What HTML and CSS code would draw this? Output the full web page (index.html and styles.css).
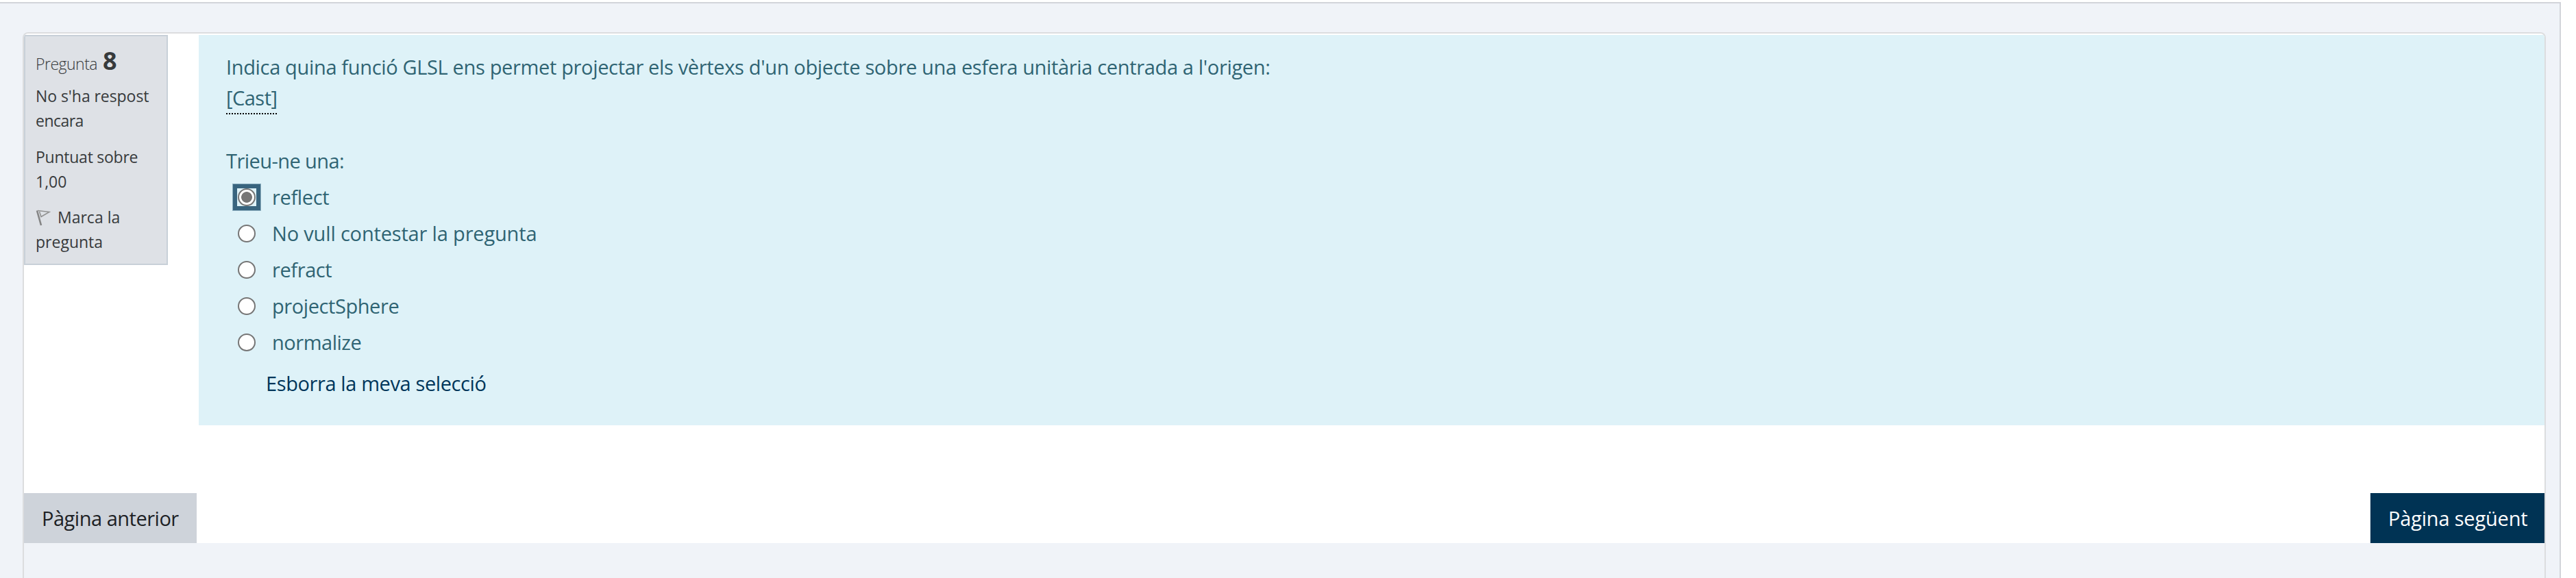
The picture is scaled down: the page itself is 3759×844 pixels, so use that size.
FILE: index.html
```html
<!DOCTYPE html>
<html lang="ca">
<head>
<meta charset="utf-8">
<title>Pregunta 8</title>
<link rel="stylesheet" href="styles.css">
</head>
<body>
<div class="page">
  <main class="card">
    <div class="content">
      <div class="question">
        <aside class="info">
          <h3 class="number"><span class="number-label">Pregunta</span> <span class="number-value">8</span></h3>
          <p class="info-text"><span class="t-state">No s'ha respost</span><br><span class="t-yet">encara</span></p>
          <p class="info-text"><span class="t-grade">Puntuat sobre</span><br>1,00</p>
          <p class="info-text"><svg class="flag" viewBox="0 0 22 24" width="22" height="24"><path d="M2 1.5 8 23" fill="none" stroke="#858585" stroke-width="2.6"/><path d="M3 1.5 20 3.5 8 10.5 5.5 3" fill="none" stroke="#929292" stroke-width="1.6"/></svg>Marca la<br>pregunta</p>
        </aside>
        <section class="formulation">
          <p class="line t-title">Indica quina funció GLSL ens permet projectar els vèrtexs d'un objecte sobre una esfera unitària centrada a l'origen:</p>
          <p class="line"><span class="cast">[Cast]</span></p>
          <p class="line prompt">Trieu-ne una:</p>
          <div class="answers">
            <label class="answer"><span class="focus"><span class="radio checked"></span></span><span class="t-reflect">reflect</span></label>
            <label class="answer"><span class="radio"></span><span class="t-skip">No vull contestar la pregunta</span></label>
            <label class="answer"><span class="radio"></span><span class="t-refract">refract</span></label>
            <label class="answer"><span class="radio"></span><span class="t-sphere">projectSphere</span></label>
            <label class="answer"><span class="radio"></span><span class="t-norm">normalize</span></label>
          </div>
          <a class="clear">Esborra la meva selecció</a>
        </section>
      </div>
      <nav class="buttons">
        <button class="btn prev">Pàgina anterior</button>
        <button class="btn next">Pàgina següent</button>
      </nav>
    </div>
  </main>
</div>
</body>
</html>
```
FILE: styles.css
```css
* { box-sizing: border-box; }
body {
  margin: 0;
  padding-top: 3px;
  height: 844px;
  overflow: hidden;
  background: #fff;
  font: 29px/45px "Open Sans", "Noto Sans", sans-serif;
}
p, h3 { margin: 0; font-weight: 400; }
.page {
  width: 3737px;
  height: 841px;
  padding: 42px 20px 0 33px;
  border: solid #d2d4da;
  border-width: 2px 2px 0 0;
  background: #f0f3f8;
}
.card {
  height: 797px;
  border: 2px solid #dcdddf;
  border-bottom: 0;
  border-radius: 8px 8px 0 0;
  overflow: hidden;
}
.content {
  height: 744px;
  padding-top: 2px;
  background: #fff;
}
.question {
  display: flex;
  align-items: flex-start;
  justify-content: space-between;
  height: 669px;
}
.info {
  width: 210px;
  height: 336px;
  padding: 18px 0 0 15px;
  border: 2px solid #c8d0d8;
  background: #dee1e6;
  color: #373a3c;
  font-size: 23px;
  line-height: 36px;
  white-space: nowrap;
}
.number { line-height: 40px; }
.number-label { font-size: 23px; font-weight: 300; letter-spacing: -.5px; }
.number-value { font-size: 36px; font-weight: 700; line-height: 36px; margin-left: 1px; }
.info-text { margin: 0 0 16px; }
.number + .info-text { margin-top: 9px; margin-bottom: 17px; }
.flag { margin-right: 10px; vertical-align: -4px; }
.t-state { letter-spacing: -.06px; }
.t-yet { letter-spacing: -.54px; }
.t-grade { letter-spacing: -.25px; }
.formulation {
  width: 3423px;
  height: 570px;
  padding: 24px 40px 0;
  background: #def2f8;
  color: #2f6473;
}
.line { height: 45px; letter-spacing: -.5px; }
.t-title { letter-spacing: -.34px; }
.cast {
  display: inline-block;
  width: 75px;
  height: 47px;
  background: repeating-linear-gradient(90deg, #000 0 2px, transparent 2px 4px) left bottom / 100% 2px no-repeat;
}
.prompt { margin-top: 47px; letter-spacing: -.56px; }
.answers { margin-top: 8px; }
.answer {
  display: flex;
  height: 53px;
  padding-left: 17px;
  gap: 24px;
}
.radio {
  width: 26px;
  height: 26px;
  margin-top: 10px;
  border: 2px solid #767676;
  border-radius: 50%;
  background: #fff;
}
.focus {
  display: flex;
  justify-content: center;
  width: 28px;
  height: 26px;
  margin: 10px -1px 0;
  box-shadow: 0 0 0 6px #38647e, 0 0 0 7px #8fb1c1;
}
.radio.checked {
  margin-top: 0;
  background: radial-gradient(circle, #767676 7.5px, #fff 8.3px);
}
.t-reflect { letter-spacing: -.35px; }
.t-skip { letter-spacing: -.17px; }
.t-refract { letter-spacing: -.4px; }
.t-sphere { letter-spacing: -.42px; }
.t-norm { letter-spacing: -.48px; }
.clear {
  display: block;
  margin: 7px 0 0 58px;
  color: #00365a;
  letter-spacing: -.39px;
}
.buttons { display: flex; justify-content: space-between; }
.btn {
  height: 73px;
  padding: 0 0 0 26px;
  border: 0;
  font: inherit;
  text-align: left;
}
.prev { width: 252px; background: #ced3da; color: #1d2125; letter-spacing: -.49px; }
.next { width: 254px; background: #003354; color: #fff; letter-spacing: -.19px; }
```
